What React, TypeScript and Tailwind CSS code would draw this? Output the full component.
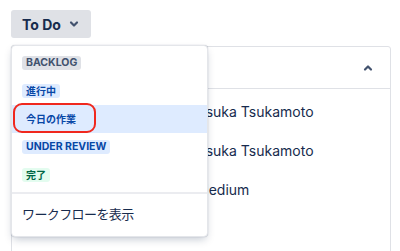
import { ReactNode } from "react";

const font = { fontFamily: 'Inter, "Noto Sans CJK JP", sans-serif' };

function Badge({ children, tone, cjk }: { children: ReactNode; tone: "gray" | "blue" | "green"; cjk?: boolean }) {
  const tones = {
    gray: "bg-[#dfe1e6] text-[#42526e]",
    blue: "bg-[#deebff] text-[#0747a6]",
    green: "bg-[#e3fcef] text-[#006644]",
  };
  return (
    <span
      className={`inline-flex h-[14px] items-center rounded-[3px] px-[4px] font-bold uppercase leading-none ${
        cjk ? "text-[10px]" : "text-[10.5px]"
      } ${tones[tone]}`}
    >
      {children}
    </span>
  );
}

function Chevron({ up }: { up?: boolean }) {
  return (
    <svg width="10" height="10" viewBox="0 0 10 10" className="text-[#42526e]">
      <path
        d={up ? "M2 6.5 L5 3.5 L8 6.5" : "M2 3.5 L5 6.5 L8 3.5"}
        fill="none"
        stroke="currentColor"
        strokeWidth="2.2"
        strokeLinecap="round"
        strokeLinejoin="round"
      />
    </svg>
  );
}

export default function App() {
  const rows = ["Asuka Tsukamoto", "Asuka Tsukamoto", "Medium"];
  return (
    <div className="relative h-[251px] w-[400px] overflow-hidden bg-white text-[#172b4d]" style={font}>
      <div className="pl-[11px] pt-[10px]">
        <button className="flex h-[28px] w-[80px] items-center gap-[8px] rounded-[3px] bg-[#dfe1e6] pl-[11px] text-[14px] font-bold text-[#172b4d]">
          To Do
          <Chevron />
        </button>
      </div>

      {/* details panel behind */}
      <div className="ml-[11px] mt-[8px] h-[240px] w-[380px] rounded-[3px] border border-[#dfe1e6]">
        <div className="flex h-[42px] items-center justify-end border-b border-[#dfe1e6] pr-[17px]">
          <Chevron up />
        </div>
        <div className="flex flex-col pl-[184px] pt-[3px] text-[14px]">
          {rows.map((r, i) => (
            <div key={i} className="flex h-[39px] items-center">
              {r}
            </div>
          ))}
        </div>
      </div>

      {/* dropdown */}
      <div className="absolute left-[11px] top-[45px] w-[197px] rounded-[4px] border border-[#e4e6ea] bg-white shadow-[0_4px_8px_-2px_rgba(9,30,66,0.25),0_0_1px_rgba(9,30,66,0.31)]">
        <div className="flex flex-col pb-[3px] pt-[3px]">
          <div className="flex h-[28px] items-center px-[10px]">
            <Badge tone="gray">Backlog</Badge>
          </div>
          <div className="flex h-[28px] items-center px-[10px]">
            <Badge tone="blue" cjk>
              進行中
            </Badge>
          </div>
          <div className="flex h-[28px] items-center bg-[#deebff] px-[10px]">
            <Badge tone="blue" cjk>
              今日の作業
            </Badge>
          </div>
          <div className="flex h-[28px] items-center px-[10px]">
            <Badge tone="blue">Under Review</Badge>
          </div>
          <div className="flex h-[28px] items-center px-[10px]">
            <Badge tone="green" cjk>
              完了
            </Badge>
          </div>
        </div>
        <div className="flex h-[44px] items-center border-t-2 border-[#ebecf0] px-[10px] text-[13px] tracking-[-0.6px] text-[#172b4d]">
          ワークフローを表示
        </div>
      </div>

      {/* red annotation */}
      <div className="pointer-events-none absolute left-[13px] top-[103px] h-[30px] w-[83px] rounded-[9px] border-2 border-[#f0281e]" />
    </div>
  );
}
